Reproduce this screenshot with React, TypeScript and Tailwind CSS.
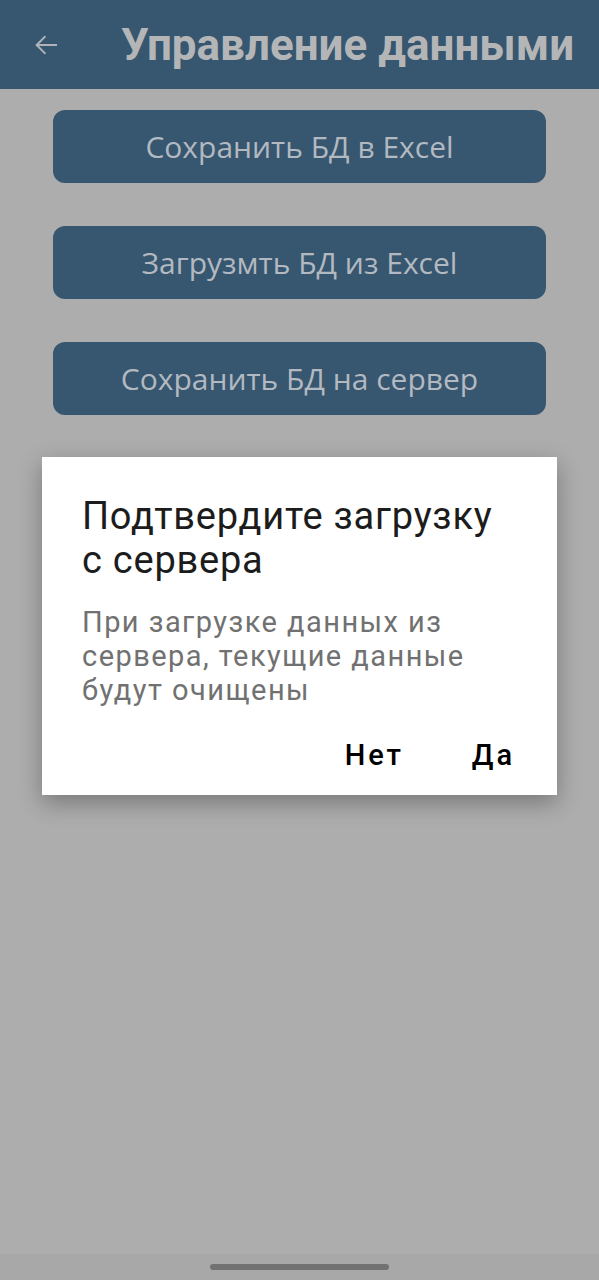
import React from 'react';

const actions = ['Сохранить БД в Excel', 'Загрузмть БД из Excel', 'Сохранить БД на сервер'];

export default function App() {
  return (
    <div className="relative h-[1280px] w-full bg-[#adadad] flex flex-col overflow-hidden">
      <header className="h-[89px] bg-[#37566f] flex items-center shrink-0">
        <button className="w-[92px] h-full flex items-center pl-[31px]">
          <svg width="30" height="30" viewBox="0 0 24 24" fill="none" stroke="#b0b4b8" strokeWidth="1.6" strokeLinecap="square">
            <path d="M20 12H5" />
            <path d="M11 5.5 4.5 12l6.5 6.5" />
          </svg>
        </button>
        <h1 className="ml-[29px] text-[44px] leading-none font-bold text-[#b4b5b6]" style={{ fontFamily: 'Roboto, sans-serif' }}>
          Управление данными
        </h1>
      </header>

      <div className="flex flex-col gap-[43px] px-[53px] pt-[21px]">
        {actions.map((a) => (
          <button
            key={a}
            className="h-[73px] rounded-[12px] bg-[#37566f] text-[#b2b9c0] text-[30px]"
            style={{ fontFamily: '"Open Sans", sans-serif' }}
          >
            {a}
          </button>
        ))}
      </div>

      <div className="flex-1" />
      <div className="h-[26px] bg-[#a8a8a8] flex items-start justify-center pt-[10px]">
        <div className="w-[179px] h-[6px] rounded-full bg-[#727272]" />
      </div>

      {/* dialog */}
      <div
        className="absolute left-[42px] top-[457px] w-[515px] h-[338px] bg-white shadow-[0_8px_22px_rgba(0,0,0,0.3)] pt-[37px] pl-[40px] pr-[45px] flex flex-col"
        style={{ fontFamily: 'Roboto, sans-serif' }}
      >
        <h2 className="text-[38px] leading-[44px] tracking-[0.02em] text-[#1c1c1c]">Подтвердите загрузку с сервера</h2>
        <p className="mt-[23px] text-[29px] leading-[34px] text-[#717171] tracking-[0.05em]">
          При загрузке данных из сервера, текущие данные будут очищены
        </p>
        <div className="flex justify-end gap-[68px] mt-[31px] -mr-[3px]">
          <span className="text-[29px] leading-[34px] font-medium tracking-[0.1em] text-black">Нет</span>
          <span className="text-[29px] leading-[34px] font-medium tracking-[0.1em] text-black">Да</span>
        </div>
      </div>
    </div>
  );
}
